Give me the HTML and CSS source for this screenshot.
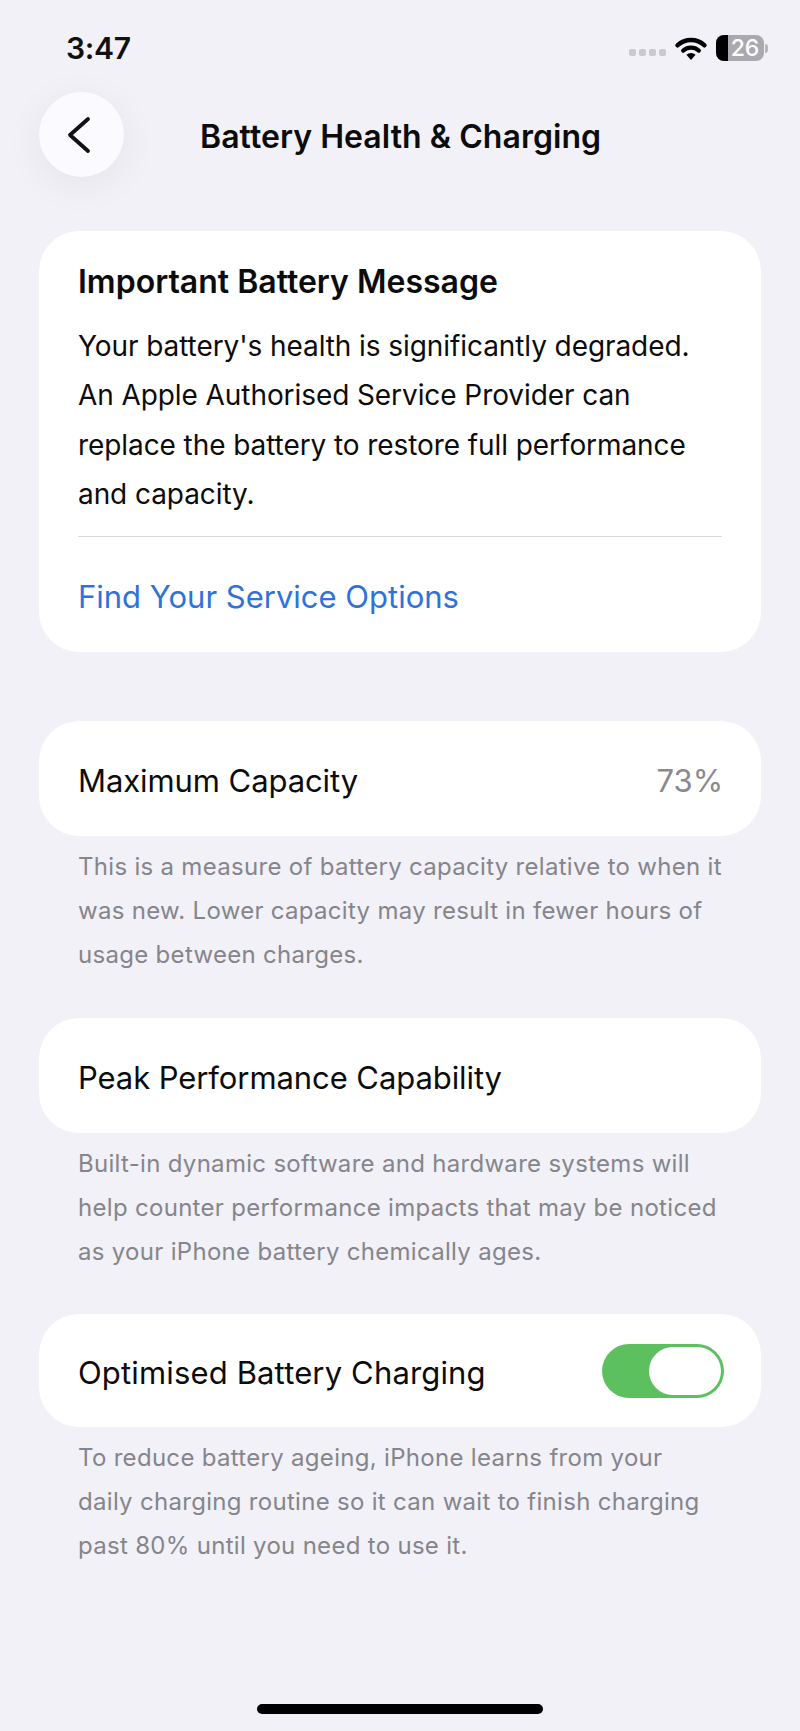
FILE: index.html
```html
<!DOCTYPE html>
<html lang="en">

<head>
    <meta charset="UTF-8" />
    <title>Battery Health &amp; Charging</title>
    <link rel="stylesheet" href="styles.css">
</head>

<body>
    <div class="phone">
        <div class="status-bar">
            <span class="time">3:47</span>
            <div class="status-icons">
                <div class="signal"><i></i><i></i><i></i><i></i></div>
                <svg class="wifi" width="34" height="25" viewBox="0 0 32 24">
                    <path d="M3 9 A19 19 0 0 1 29 9" fill="none" stroke="#000" stroke-width="4.2" stroke-linecap="round" />
                    <path d="M8.5 14 A11.5 11.5 0 0 1 23.5 14" fill="none" stroke="#000" stroke-width="4" stroke-linecap="round" />
                    <path d="M11.6 18 A6.4 6.4 0 0 1 20.4 18 L16 23 Z" fill="#000" />
                </svg>
                <div class="battery">
                    <div class="battery-fill"></div>
                    <span class="battery-num">26</span>
                </div>
                <div class="battery-cap"></div>
            </div>
        </div>

        <div class="nav">
            <button class="back">
                <svg width="26" height="38" viewBox="0 0 26 38">
                    <path d="M22 3 L4 19 L22 35" fill="none" stroke="#111" stroke-width="3.8" stroke-linecap="round" stroke-linejoin="round" />
                </svg>
            </button>
            <h1 class="title">Battery Health &amp; Charging</h1>
        </div>

        <div class="card message">
            <h2>Important Battery Message</h2>
            <p>Your battery's health is significantly degraded.<br />An Apple Authorised Service Provider can<br />replace the battery to restore full performance<br />and capacity.</p>
            <hr />
            <a href="#">Find Your Service Options</a>
        </div>

        <div class="card row">
            <span>Maximum Capacity</span>
            <span class="value">73%</span>
        </div>
        <p class="note">This is a measure of battery capacity relative to when it<br />was new. Lower capacity may result in fewer hours of<br />usage between charges.</p>

        <div class="card row">
            <span>Peak Performance Capability</span>
        </div>
        <p class="note">Built-in dynamic software and hardware systems will<br />help counter performance impacts that may be noticed<br />as your iPhone battery chemically ages.</p>

        <div class="card row row-charging">
            <span>Optimised Battery Charging</span>
            <div class="toggle"><div class="knob"></div></div>
        </div>
        <p class="note">To reduce battery ageing, iPhone learns from your<br />daily charging routine so it can wait to finish charging<br />past 80% until you need to use it.</p>

        <div class="home-bar"></div>
    </div>
</body>

</html>
```

FILE: styles.css
```css
* {
    box-sizing: border-box;
    font-family: "Inter", "Liberation Sans", sans-serif;
}

body {
    margin: 0;
    padding: 0;
    background: #f1f1f7;
}

.phone {
    width: 800px;
    height: 1731px;
    padding: 0 39px;
    color: #0c0c0c;
    display: flex;
    flex-direction: column;
    overflow: hidden;
}

/* top bar */

.status-bar {
    height: 92px;
    margin-left: 27px;
    display: flex;
    justify-content: space-between;
    align-items: flex-start;
    padding-top: 29px;
}

.time {
    font-size: 30px;
    line-height: 38px;
    font-weight: 600;
    letter-spacing: -0.3px;
    color: #111;
}

.status-icons {
    display: flex;
    align-items: center;
    height: 38px;
    margin-right: -7px;
}

.signal {
    display: flex;
    gap: 3px;
    margin-right: 8px;
    margin-top: 9px;
}

.signal i {
    display: block;
    width: 7px;
    height: 7px;
    border-radius: 2px;
    background: #c9c9ce;
}

.wifi {
    margin-right: 8px;
}

.battery {
    width: 48px;
    height: 26px;
    border-radius: 8px;
    background: #a9a9ae;
    overflow: hidden;
    display: flex;
    justify-content: center;
    align-items: center;
}

.battery-fill {
    width: 12px;
    height: 26px;
    background: #000;
    flex: none;
}

.battery-num {
    flex: 1;
    margin-left: -2px;
    text-align: center;
    font-size: 23px;
    font-weight: 500;
    line-height: 26px;
    color: #fff;
}

.battery-cap {
    width: 3px;
    height: 9px;
    margin-left: 1px;
    border-radius: 0 3px 3px 0;
    background: #b5b5ba;
}

.nav {
    height: 139px;
    display: flex;
    align-items: flex-start;
}

.back {
    width: 85px;
    height: 85px;
    flex: none;
    border: 0;
    padding: 0 5px 0 0;
    border-radius: 50%;
    background: #fafaff;
    box-shadow: 0 8px 40px rgba(0, 0, 0, 0.06);
    display: flex;
    align-items: center;
    justify-content: center;
}

.title {
    margin: 0;
    padding: 2px 0 0 76px;
    font-size: 32px;
    line-height: 85px;
    font-weight: 600;
    letter-spacing: 0.05px;
    white-space: nowrap;
}

/* cards */

.card {
    background: #fff;
    border-radius: 40px;
    font-size: 31px;
}

.message {
    height: 421px;
    padding: 31px 39px 0;
    margin-bottom: 69px;
}

.message h2 {
    margin: 0 0 20px;
    font-size: 32px;
    line-height: 40px;
    font-weight: 600;
}

.message p {
    margin: 0;
    font-size: 28px;
    line-height: 49.4px;
    letter-spacing: -0.08px;
}

.message hr {
    border: 0;
    height: 1px;
    background: #d9d9dc;
    margin: 16px 0 0;
}

.message a {
    display: block;
    margin-top: 40px;
    font-size: 31px;
    line-height: 40px;
    color: #2f72d8;
    text-decoration: none;
}

.row {
    height: 115px;
    padding: 3px 38px 0 39px;
    display: flex;
    align-items: center;
    justify-content: space-between;
    letter-spacing: -0.08px;
    flex: none;
}

.row-charging {
    height: 113px;
    letter-spacing: 0.15px;
    margin-top: -1px;
}

.value {
    color: #8a8a8e;
}

.toggle {
    width: 122px;
    height: 54px;
    margin: -3px -1px 0 0;
    border-radius: 27px;
    background: #5cc05f;
    padding: 3px;
    display: flex;
    justify-content: flex-end;
}

.knob {
    width: 72px;
    height: 48px;
    border-radius: 24px;
    background: #fff;
}

.note {
    margin: 9px 39px 0;
    height: 173px;
    font-size: 24px;
    line-height: 44.2px;
    letter-spacing: 0.3px;
    color: #85858b;
    white-space: nowrap;
}

.home-bar {
    position: absolute;
    left: 257px;
    top: 1704px;
    width: 286px;
    height: 10px;
    border-radius: 5px;
    background: #000;
}
```
